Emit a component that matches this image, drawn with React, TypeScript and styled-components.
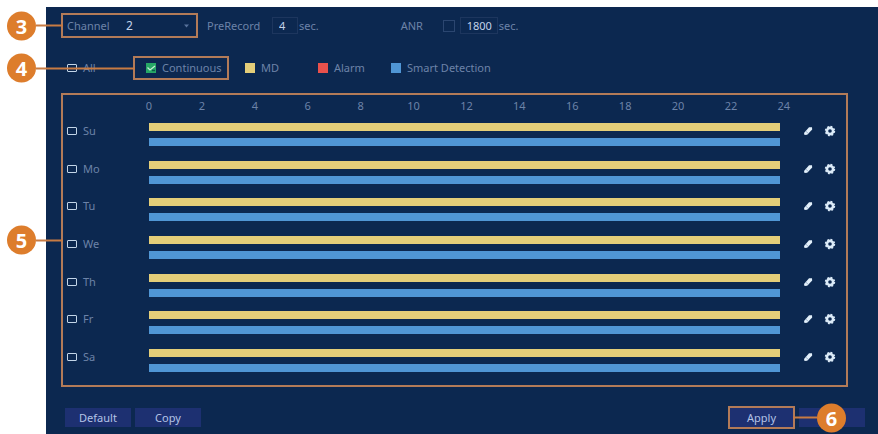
import React from "react";
import styled, { createGlobalStyle, css } from "styled-components";

const color = {
  panel: "#0c2850",
  text: "#6c83a8",
  bright: "#c3d3ea",
  outline: "#b37b58",
  badge: "#dd7d2c",
  button: "#1d3071",
  yellow: "#e4ce79",
  blue: "#5096d5",
  red: "#e9514c",
  green: "#27a866",
};

const GlobalStyle = createGlobalStyle`
  * { box-sizing: border-box; }
  body { margin: 0; background: #fff; }
  body, button, input, select {
    font-family: "Noto Sans", "Open Sans", sans-serif;
    font-size: 11px;
    line-height: 16px;
  }
`;

const Page = styled.main`
  min-height: 100vh;
  padding: 7px 0 0 46px;
  display: flex;
`;

const Panel = styled.div`
  flex: 1;
  display: flex;
  flex-direction: column;
  padding: 6px 0 5px 15px;
  background: ${color.panel};
  color: ${color.text};
`;

const Outlined = styled.div`
  position: relative;
  border: 2px solid ${color.outline};
`;

const Callout = styled.span<{ $side: "left" | "right"; $line: number }>`
  position: absolute;
  z-index: 1;
  top: 50%;
  transform: translateY(-50%);
  display: flex;
  align-items: center;
  flex-direction: ${(p) => (p.$side === "left" ? "row" : "row-reverse")};
  ${(p) => (p.$side === "left" ? "right: 100%;" : "left: 100%;")}
  pointer-events: none;

  &::after {
    content: "";
    width: ${(p) => p.$line}px;
    height: 2px;
    background: #c87b43;
  }
`;

const Badge = styled.b`
  width: 29px;
  height: 29px;
  border-radius: 50%;
  background: ${color.badge};
  color: #fff;
  font-size: 20px;
  line-height: 29px;
  text-align: center;
`;

const Toolbar = styled.div`
  display: flex;
  align-items: center;
  height: 25px;
`;

const ChannelBox = styled(Outlined)`
  display: flex;
  align-items: center;
  width: 137px;
  height: 25px;
  padding: 0 7px 0 4px;
  margin-right: 9px;
`;

const ChannelLabel = styled.label`
  width: 57px;
`;

const ChannelSelect = styled.select`
  appearance: none;
  flex: 1;
  min-width: 0;
  padding: 0 0 0 2px;
  border: 0;
  outline: 0;
  background: transparent;
  color: ${color.bright};
  font-size: 12px;
`;

const FieldLabel = styled.label<{ $width: number }>`
  width: ${(p) => p.$width}px;
`;

const NumberBox = styled.input<{ $width: number }>`
  width: ${(p) => p.$width}px;
  height: 17px;
  padding: 0 0 0 6px;
  border: 1px solid #1d365e;
  outline: 0;
  background: transparent;
  color: ${color.bright};
`;

const Unit = styled.span`
  margin: 0 82px 0 1px;
`;

const PlainCheck = styled.input`
  appearance: none;
  width: 12px;
  height: 12px;
  margin: 0 5px 0 0;
  border: 1px solid #2b4670;
`;

const Legend = styled.div`
  display: flex;
  align-items: center;
  height: 24px;
  margin: 18px 0 13px;
`;

const RowCheckLabel = styled.label`
  display: flex;
  align-items: center;
  gap: 6px;
  height: 16px;
  padding-left: 4px;
`;

const AllLabel = styled(RowCheckLabel)`
  width: 72px;
  padding-left: 6px;
`;

const RowCheck = styled.input`
  appearance: none;
  width: 10px;
  height: 8px;
  margin: 0;
  border: 1px solid #c3d5e8;
  border-radius: 1px;
`;

const ContinuousBox = styled(Outlined)`
  height: 24px;
  width: 96px;
  padding: 0 0 0 11px;
  margin-right: 16px;
  display: flex;
  align-items: center;
`;

const TypeLabel = styled.label<{ $width?: number }>`
  display: flex;
  align-items: center;
  gap: 6px;
  white-space: nowrap;
  ${(p) => p.$width && css`width: ${p.$width}px;`}
`;

const Swatch = styled.span<{ $color: string }>`
  display: grid;
  width: 10px;
  height: 10px;
  background: ${(p) => p.$color};

  > * { grid-area: 1 / 1; }
`;

const SwatchInput = styled.input`
  appearance: none;
  width: 10px;
  height: 10px;
  margin: 0;
`;

const Schedule = styled(Outlined)`
  margin-right: 30px;
  padding: 3px 0 13px;
`;

const Hours = styled.div`
  display: flex;
  justify-content: space-between;
  padding: 0 52px 0 76px;
  margin-bottom: 9px;
`;

const Hour = styled.span`
  width: 20px;
  text-align: center;
`;

const Days = styled.div`
  display: flex;
  flex-direction: column;
  justify-content: space-between;
  min-height: 249px;
`;

const Day = styled.div`
  display: grid;
  grid-template-columns: 86px 1fr 66px;
  height: 23px;
`;

const Bars = styled.div`
  display: flex;
  flex-direction: column;
  gap: 7px;
`;

const Bar = styled.div<{ $color: string }>`
  height: 8px;
  background: ${(p) => p.$color};
`;

const Actions = styled.div`
  display: flex;
  align-items: center;
  gap: 10px;
  height: 16px;
  padding-left: 22px;
`;

const IconButton = styled.button`
  display: flex;
  width: 12px;
  height: 12px;
  padding: 0;
  border: 0;
  background: none;
`;

const Footer = styled.footer`
  display: flex;
  align-items: center;
  height: 23px;
  margin: 19px 13px 0 4px;
`;

const Button = styled.button`
  width: 66px;
  height: 19px;
  padding: 0;
  margin-right: 4px;
  border: 0;
  background: ${color.button};
  color: #b4c3e6;

  &:last-child { margin-right: 0; }
`;

const ApplyBox = styled(Outlined)`
  display: flex;
  height: 23px;
  width: 67px;
  margin: 0 4px 0 auto;

  > button { width: 100%; margin: 0; }
`;

function Marker({ n, side = "left", line }: { n: number; side?: "left" | "right"; line: number }) {
  return (
    <Callout $side={side} $line={line}>
      <Badge>{n}</Badge>
    </Callout>
  );
}

function TypeCheck({ name, fill, width, checked }: { name: string; fill: string; width?: number; checked?: boolean }) {
  return (
    <TypeLabel $width={width}>
      <Swatch $color={fill}>
        <SwatchInput type="checkbox" defaultChecked={checked} />
        {checked && (
          <svg width="10" height="10" viewBox="0 0 10 10" pointerEvents="none">
            <path d="M1.5 4.5 4 7 9 3" fill="none" stroke="#c5eed5" strokeWidth="1.3" />
            <path d="M6 7.5h3" stroke="#0c5c48" strokeWidth="1.4" />
          </svg>
        )}
      </Swatch>
      {name}
    </TypeLabel>
  );
}

const EraserIcon = () => (
  <svg width="12" height="12" viewBox="0 0 12 12">
    <path d="M2 8 7 2.3 10 2.3 10.2 4.5 5.2 9.7 2.5 10Z" fill="#e3f0fb" />
    <path d="m3.8 6.2 2.6 2.3" stroke="#7f9ab9" strokeWidth=".7" />
  </svg>
);

const GearIcon = () => (
  <svg width="12" height="12" viewBox="0 0 12 12" fill="none" stroke="#dcebf8">
    <circle cx="6" cy="6" r="3.1" strokeWidth="2.6" />
    <circle cx="6" cy="6" r="4.5" strokeWidth="1.4" strokeDasharray="1.9 1.634" />
  </svg>
);

const hours = Array.from({ length: 13 }, (_, i) => i * 2);
const days = ["Su", "Mo", "Tu", "We", "Th", "Fr", "Sa"];

export default function App() {
  return (
    <Page>
      <GlobalStyle />
      <Panel>
        <Toolbar>
          <ChannelBox>
            <Marker n={3} line={27} />
            <ChannelLabel htmlFor="channel">Channel</ChannelLabel>
            <ChannelSelect id="channel" defaultValue="2">
              <option>1</option>
              <option>2</option>
            </ChannelSelect>
            <svg width="5" height="4" viewBox="0 0 5 4">
              <path d="M0 .5h5L2.5 3.5Z" fill="#58729b" />
            </svg>
          </ChannelBox>
          <FieldLabel htmlFor="prerecord" $width={65}>PreRecord</FieldLabel>
          <NumberBox id="prerecord" defaultValue="4" $width={26} />
          <Unit>sec.</Unit>
          <FieldLabel htmlFor="anr" $width={42}>ANR</FieldLabel>
          <PlainCheck id="anr" type="checkbox" />
          <NumberBox aria-label="ANR seconds" defaultValue="1800" $width={38} />
          <Unit>sec.</Unit>
        </Toolbar>

        <Legend>
          <AllLabel>
            <RowCheck type="checkbox" />
            All
          </AllLabel>
          <ContinuousBox>
            <Marker n={4} line={99} />
            <TypeCheck name="Continuous" fill={color.green} checked />
          </ContinuousBox>
          <TypeCheck name="MD" fill={color.yellow} width={73} />
          <TypeCheck name="Alarm" fill={color.red} width={73} />
          <TypeCheck name="Smart Detection" fill={color.blue} />
        </Legend>

        <Schedule>
          <Marker n={5} line={27} />
          <Hours>
            {hours.map((h) => (
              <Hour key={h}>{h}</Hour>
            ))}
          </Hours>
          <Days>
            {days.map((d) => (
              <Day key={d}>
                <RowCheckLabel>
                  <RowCheck type="checkbox" />
                  {d}
                </RowCheckLabel>
                <Bars>
                  <Bar $color={color.yellow} />
                  <Bar $color={color.blue} />
                </Bars>
                <Actions>
                  <IconButton aria-label={`Clear ${d}`}>
                    <EraserIcon />
                  </IconButton>
                  <IconButton aria-label={`Set up ${d}`}>
                    <GearIcon />
                  </IconButton>
                </Actions>
              </Day>
            ))}
          </Days>
        </Schedule>

        <Footer>
          <Button>Default</Button>
          <Button>Copy</Button>
          <ApplyBox>
            <Button>Apply</Button>
            <Marker n={6} side="right" line={24} />
          </ApplyBox>
          <Button aria-label="Cancel" />
        </Footer>
      </Panel>
    </Page>
  );
}
